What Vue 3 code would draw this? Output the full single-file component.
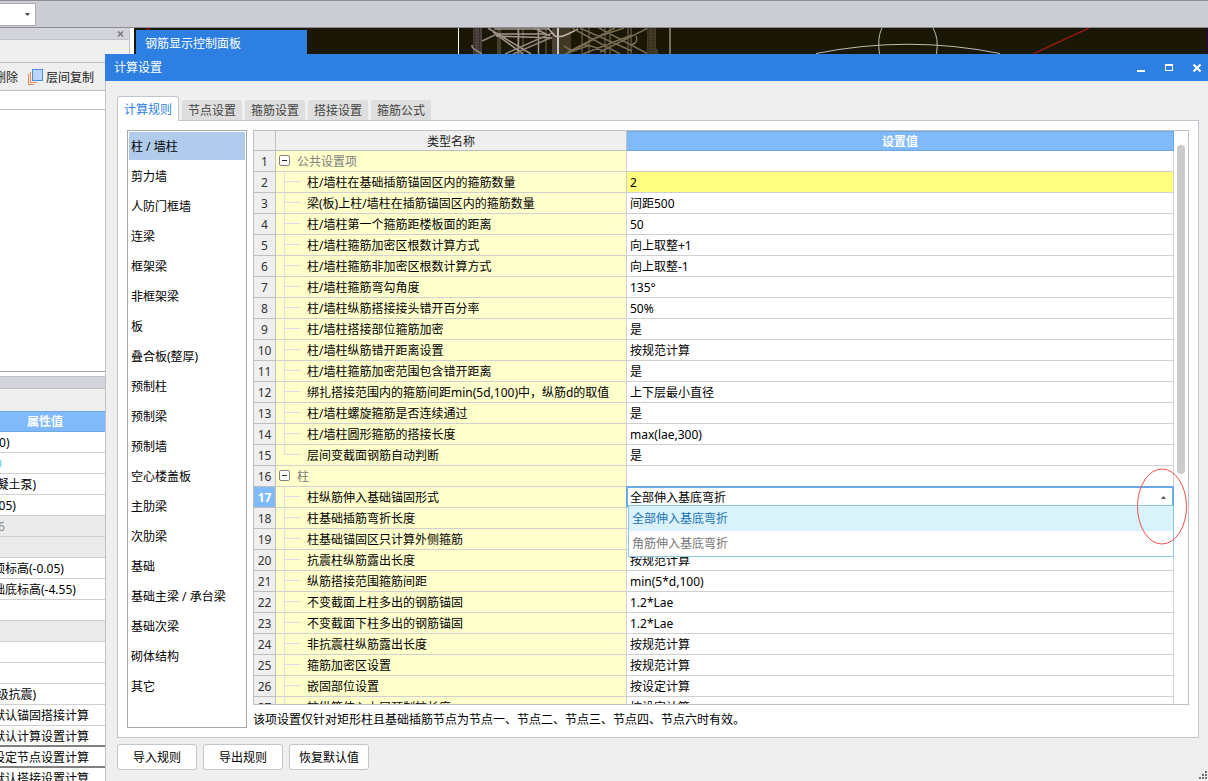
<script setup>
import { ref } from 'vue'

const tabs = ['计算规则', '节点设置', '箍筋设置', '搭接设置', '箍筋公式']
const activeTab = ref(0)

const categories = [
  '柱 / 墙柱', '剪力墙', '人防门框墙', '连梁', '框架梁', '非框架梁', '板', '叠合板(整厚)',
  '预制柱', '预制梁', '预制墙', '空心楼盖板', '主肋梁', '次肋梁', '基础',
  '基础主梁 / 承台梁', '基础次梁', '砌体结构', '其它',
]
const activeCategory = ref(0)

const options = ['全部伸入基底弯折', '角筋伸入基底弯折']
const anchorForm = ref(options[0])

const rows = [
  { name: '公共设置项', group: true },
  { name: '柱/墙柱在基础插筋锚固区内的箍筋数量', value: '2', marked: true },
  { name: '梁(板)上柱/墙柱在插筋锚固区内的箍筋数量', value: '间距500' },
  { name: '柱/墙柱第一个箍筋距楼板面的距离', value: '50' },
  { name: '柱/墙柱箍筋加密区根数计算方式', value: '向上取整+1' },
  { name: '柱/墙柱箍筋非加密区根数计算方式', value: '向上取整-1' },
  { name: '柱/墙柱箍筋弯勾角度', value: '135°' },
  { name: '柱/墙柱纵筋搭接接头错开百分率', value: '50%' },
  { name: '柱/墙柱搭接部位箍筋加密', value: '是' },
  { name: '柱/墙柱纵筋错开距离设置', value: '按规范计算' },
  { name: '柱/墙柱箍筋加密范围包含错开距离', value: '是' },
  { name: '绑扎搭接范围内的箍筋间距min(5d,100)中，纵筋d的取值', value: '上下层最小直径' },
  { name: '柱/墙柱螺旋箍筋是否连续通过', value: '是' },
  { name: '柱/墙柱圆形箍筋的搭接长度', value: 'max(lae,300)' },
  { name: '层间变截面钢筋自动判断', value: '是', last: true },
  { name: '柱', group: true },
  { name: '柱纵筋伸入基础锚固形式', editing: true },
  { name: '柱基础插筋弯折长度', value: '' },
  { name: '柱基础锚固区只计算外侧箍筋', value: '' },
  { name: '抗震柱纵筋露出长度', value: '按规范计算' },
  { name: '纵筋搭接范围箍筋间距', value: 'min(5*d,100)' },
  { name: '不变截面上柱多出的钢筋锚固', value: '1.2*Lae' },
  { name: '不变截面下柱多出的钢筋锚固', value: '1.2*Lae' },
  { name: '非抗震柱纵筋露出长度', value: '按规范计算' },
  { name: '箍筋加密区设置', value: '按规范计算' },
  { name: '嵌固部位设置', value: '按设定计算' },
  { name: '柱纵筋伸入上层预制柱长度', value: '按设定计算' },
]

const properties = [
  { text: '(C20)' },
  { text: '320', tone: 'link' },
  { text: '(混凝土泵)' },
  { text: '(-0.05)' },
  { text: '4.56', tone: 'muted' },
  { text: '', tone: 'muted' },
  { text: '层顶标高(-0.05)' },
  { text: '基础底标高(-4.55)' },
  { text: '' },
  { text: '', tone: 'muted' },
  { text: '' },
  { text: '' },
  { text: '(一级抗震)' },
  { text: '按默认锚固搭接计算' },
  { text: '按默认计算设置计算', tone: 'ruled' },
  { text: '按设定节点设置计算', tone: 'ruled' },
  { text: '按默认搭接设置计算' },
]
</script>

<template>
  <div class="app">
    <header class="ribbon">
      <button class="combo" type="button" aria-label="楼层">
        <svg width="5" height="3" viewBox="0 0 5 3"><path d="M0 0H5L2.500 3Z" fill="#444" /></svg>
      </button>
    </header>

    <div class="workspace">
      <aside class="side">
        <div class="side-title">
          <button type="button" class="side-close" aria-label="关闭">
            <svg width="7" height="6" viewBox="0 0 7 6"><path d="M1 0.500L6 5.500M6 0.500L1 5.500" stroke="#777" stroke-width="1.500" /></svg>
          </button>
        </div>
        <div class="side-blank"></div>
        <div class="side-tools">
          <button type="button"><span>删除</span></button>
          <button type="button">
            <svg width="15" height="16" viewBox="0 0 15 16" fill="none">
              <path d="M.5 5V15.500H6M2.500 3V13.500H9" stroke="#e8894a" />
              <rect x="4.500" y=".5" width="10" height="11" fill="#b9d6fa" stroke="#4a90e2" />
            </svg>
            <span>层间复制</span>
          </button>
        </div>
        <div class="side-search"></div>
        <div class="side-list"></div>
        <div class="side-gap"></div>
        <div class="side-title lower"></div>
        <div class="side-blank lower"></div>
        <table class="props">
          <thead><tr><th>属性值</th></tr></thead>
          <tbody>
            <tr v-for="(p, i) in properties" :key="i" :class="p.tone"><td>{{ p.text }}</td></tr>
          </tbody>
        </table>
      </aside>

      <main class="viewport">
        <svg class="model" width="1074" height="26" viewBox="134 28 1074 26" fill="none">
          <path d="M458.500 28V54" stroke="#fff" />
          <path d="M473 28H482V54H473Z" fill="#4b403b" />
          <path d="M474.500 28V54M479.500 28V54" stroke="#2e2724" stroke-dasharray="2 1" />
          <path d="M498 28V54M500 28V54M518 28V54M523 28V54M546 28V54" stroke="#6d6455" />
          <path d="M518.500 28V54M538.500 28V54" stroke="#a4948d" stroke-width="1.500" />
          <path d="M488 28L531 54M493 32L523 54M494 29H548M498 34H546M496 36L556 38M534 28L550 36" stroke="#a4948d" stroke-width="1.500" />
          <path d="M505 54L552 33M513 54L555 36M482 41L497 34M473 46Q470 45 474 49L482 54" stroke="#91827a" stroke-width="1.500" />
          <path d="M559 28H571V54H559Z" fill="#403823" />
          <path d="M554.500 28V54" stroke="#4a4038" stroke-width="5" />
          <path d="M558 28V54" stroke="#fff" stroke-width="1.500" />
          <path d="M548 28L555 36Q560 38 568 34L578 29" stroke="#c0b1aa" stroke-width="1.500" />
          <path d="M582 28V54M589 28V54M605 28V54M610 28V54M628 28V54M631 28V54" stroke="#595039" stroke-width="1.500" />
          <path d="M564 46L572 51L600 36L624 28M568 52L615 28M572 28L620 54M580 28L632 51M599 28L648 54M648 28L600 52M632 35L583 54M590 45L565 54M584 45Q589 44 606 52M636 36Q639 43 630 45" stroke="#776b50" stroke-width="1.500" />
          <path d="M647 28H656V54H647Z" fill="#443a24" />
          <path d="M649 28V54M653 28V54" stroke="#292211" stroke-dasharray="2 1" />
          <path d="M656 49Q658 50 657 54" stroke="#71664b" />
          <path d="M670 28V54" stroke="#776f60" stroke-width="2" />
          <path d="M816 53.500Q908 35 1000 53.500M879.500 54Q877 38 882 28M936.500 54Q939 38 933 28" stroke="#bdbdb5" />
          <path d="M1033 54L1089 28M146 28L151 31" stroke="#8d1b0b" stroke-width="1.500" />
          <path d="M1207.500 28V54" stroke="#2b064f" />
        </svg>
        <div class="float-title">钢筋显示控制面板</div>
      </main>
    </div>

    <section class="dialog" role="dialog" aria-labelledby="dialog-title">
      <header class="titlebar">
        <h1 id="dialog-title">计算设置</h1>
        <button type="button" aria-label="最小化">
          <svg width="8" height="8" viewBox="0 0 8 8"><path d="M0 6H8V8H0Z" fill="#fff" /></svg>
        </button>
        <button type="button" aria-label="最大化">
          <svg width="8" height="8" viewBox="0 0 8 8"><path d="M0 0H8V7H0ZM1 2V6H7V2Z" fill="#fff" fill-rule="evenodd" /></svg>
        </button>
        <button type="button" aria-label="关闭">
          <svg width="8" height="8" viewBox="0 0 8 8"><path d="M.5 .5L7.500 7.500M7.500 .5L.5 7.500" stroke="#fff" stroke-width="2" /></svg>
        </button>
      </header>

      <div class="dialog-body">
        <nav class="tabs" role="tablist">
          <button
            v-for="(t, i) in tabs" :key="t" type="button" role="tab"
            :class="{ active: i === activeTab }" :aria-selected="i === activeTab"
            @click="activeTab = i"
          >{{ t }}</button>
        </nav>

        <div class="pane">
          <ul class="categories">
            <li v-for="(c, i) in categories" :key="c">
              <button type="button" :class="{ active: i === activeCategory }" @click="activeCategory = i">{{ c }}</button>
            </li>
          </ul>

          <div class="settings">
            <div class="grid-box">
              <table class="grid">
                <thead>
                  <tr><th class="num"></th><th class="name">类型名称</th><th class="val">设置值</th></tr>
                </thead>
                <tbody>
                  <tr v-for="(r, i) in rows" :key="i" :class="{ group: r.group, marked: r.marked, editing: r.editing, last: r.last }">
                    <th class="num" scope="row">{{ i + 1 }}</th>
                    <td class="name">
                      <div class="node">
                        <button v-if="r.group" type="button" class="toggle" aria-label="折叠">
                          <svg width="11" height="11" viewBox="0 0 11 11">
                            <rect x=".5" y=".5" width="10" height="10" rx="1.500" fill="#fff" stroke="#808080" />
                            <path d="M3 5.500H8" stroke="#222" />
                          </svg>
                        </button>
                        <span v-else class="branch"></span>
                        <span class="label">{{ r.name }}</span>
                      </div>
                    </td>
                    <td v-if="r.editing" class="val">
                      <select v-model="anchorForm" aria-label="柱纵筋伸入基础锚固形式">
                        <option v-for="o in options" :key="o">{{ o }}</option>
                      </select>
                      <svg class="caret" width="5" height="3" viewBox="0 0 5 3"><path d="M0 3H5L2.500 0Z" fill="#555" /></svg>
                      <ul class="menu" role="listbox">
                        <li v-for="o in options" :key="o" role="option" :class="{ active: o === anchorForm }" :aria-selected="o === anchorForm" @click="anchorForm = o">{{ o }}</li>
                      </ul>
                      <svg class="mark" width="50" height="77" viewBox="0 0 50 77">
                        <ellipse cx="25" cy="38.500" rx="24.500" ry="37.500" fill="none" stroke="#f05050" />
                      </svg>
                    </td>
                    <td v-else class="val">{{ r.value }}</td>
                  </tr>
                </tbody>
              </table>
              <div class="gutter"><div class="thumb"></div></div>
            </div>
            <p class="note">该项设置仅针对矩形柱且基础插筋节点为节点一、节点二、节点三、节点四、节点六时有效。</p>
          </div>
        </div>

        <footer class="actions">
          <button type="button">导入规则</button>
          <button type="button">导出规则</button>
          <button type="button">恢复默认值</button>
        </footer>
      </div>
      <svg class="grip" width="8" height="8" viewBox="0 0 8 8">
        <path d="M6 0H8V2H6ZM3 3H5V5H3ZM6 3H8V5H6ZM0 6H2V8H0ZM3 6H5V8H3ZM6 6H8V8H6Z" fill="#6b7078" />
      </svg>
    </section>
  </div>
</template>

<style>
body {
  margin: 0;
  overflow: hidden;
}
</style>

<style scoped>
* {
  box-sizing: border-box;
}
.app {
  position: relative;
  display: flex;
  flex-direction: column;
  height: 100vh;
  overflow: hidden;
  background: #fff;
  color: #000;
  font-family: "Noto Sans", "Noto Sans CJK SC", sans-serif;
  font-size: 12px;
  line-height: 20px;
}
svg {
  display: block;
}
button {
  padding: 0;
  border: 0;
  background: none;
  color: inherit;
  font: inherit;
}
ul {
  margin: 0;
  padding: 0;
  list-style: none;
}

.ribbon {
  flex: none;
  height: 28px;
  padding-top: 2px;
  border-top: 1px solid #8b8d92;
  border-bottom: 1px solid #8b8d92;
  background: #cbcdd2;
}
.combo {
  display: flex;
  align-items: center;
  justify-content: flex-end;
  width: 36px;
  height: 23px;
  padding-right: 5px;
  border: 1px solid #a9abb0;
  border-left: 0;
  background: #fff;
}

.workspace {
  display: flex;
  flex: 1;
  min-height: 0;
}
.side {
  flex: none;
  width: 130px;
  margin-right: 4px;
  overflow: hidden;
  border-right: 1px solid #bfc1c6;
}
.side-title {
  display: flex;
  align-items: center;
  justify-content: flex-end;
  height: 12px;
  padding-right: 5px;
  border-bottom: 1px solid #bfc1c6;
  background: #d4d4dc;
}
.side-blank {
  height: 23px;
  border-bottom: 1px solid #bfc1c6;
  background: #efefef;
}
.side-blank.lower {
  height: 22px;
  border-bottom: 0;
}
.side-tools {
  display: flex;
  gap: 10px;
  height: 28px;
  margin-left: -6px;
  border-bottom: 1px solid #bfc1c6;
  background: #efefef;
  color: #222;
}
.side-tools button {
  display: flex;
  flex: none;
  align-items: center;
  gap: 3px;
}
.side-tools span {
  padding-top: 2px;
}
.side-search {
  height: 19px;
  border-bottom: 1px solid #bfc1c6;
}
.side-list {
  height: 262px;
  border-bottom: 1px solid #a0a2a6;
}
.side-gap {
  height: 5px;
  border-bottom: 1px solid #bfc1c6;
}
.props {
  width: 134px;
  margin-left: -22px;
  border-spacing: 0;
  white-space: nowrap;
}
.props th {
  height: 21px;
  padding: 0;
  border-top: 1px solid #6aa9e6;
  border-bottom: 1px solid #6aa9e6;
  background: #80bafa;
  color: #fff;
  line-height: 19px;
}
.props td {
  height: 21px;
  padding: 2px 0 0 3px;
  border-bottom: 1px solid #d0d0d0;
  line-height: 18px;
}
.props .link td {
  color: #4fd0f0;
}
.props .muted td {
  background: #eaeaea;
  color: #8a8a8a;
}
.props .ruled td {
  border-bottom: 2px solid #808080;
  line-height: 17px;
}

.viewport {
  position: relative;
  flex: 1;
  min-width: 0;
  overflow: hidden;
  background: #1a1705;
}
.model {
  position: absolute;
  top: 0;
  left: 0;
}
.float-title {
  position: absolute;
  top: 2px;
  left: 2px;
  width: 171px;
  padding: 4px 9px;
  background: #2d7fe2;
  color: #fff;
}

.dialog {
  position: absolute;
  inset: 54px 0 0 105px;
  display: flex;
  flex-direction: column;
  background: #efefef;
}
.titlebar {
  display: flex;
  flex: none;
  align-items: center;
  gap: 8px;
  height: 27px;
  padding: 0 1px 0 9px;
  background: #2d7fe2;
  color: #fff;
}
.titlebar h1 {
  flex: 1;
  margin: 0;
  font-size: 12px;
  font-weight: 400;
}
.titlebar button {
  display: flex;
  align-items: center;
  justify-content: center;
  width: 20px;
  height: 20px;
}
.dialog-body {
  display: flex;
  flex: 1;
  flex-direction: column;
  min-height: 0;
  padding: 15px 9px 11px 11px;
  border-left: 1px solid #bfc1c6;
}
.tabs {
  position: relative;
  display: flex;
  flex: none;
  align-items: flex-end;
  gap: 3px;
  margin-bottom: -1px;
}
.tabs button {
  width: 60px;
  height: 20px;
  margin-bottom: 1px;
  padding-top: 2px;
  border-radius: 3px 3px 0 0;
  background: #dedede;
  color: #444;
  line-height: 18px;
}
.tabs .active {
  width: 62px;
  height: 25px;
  margin-bottom: 0;
  border: 1px solid #c0c4cc;
  border-bottom: 0;
  background: #fff;
  color: #2d7fe2;
}
.pane {
  display: flex;
  flex: 1;
  gap: 6px;
  min-height: 0;
  padding: 9px;
  border: 1px solid #c0c4cc;
  background: #fff;
}
.categories {
  display: flex;
  flex: none;
  flex-direction: column;
  gap: 2px;
  width: 120px;
  padding: 1px;
  overflow: hidden;
  border: 1px solid #a6a8ac;
}
.categories button {
  display: block;
  width: 100%;
  height: 28px;
  padding: 2px 2px 0;
  line-height: 26px;
  text-align: left;
}
.categories .active {
  background: #b1cbec;
}
.settings {
  display: flex;
  flex: 1;
  flex-direction: column;
  min-width: 0;
}
.grid-box {
  display: flex;
  flex: 1;
  align-items: flex-start;
  min-height: 0;
  overflow: hidden;
  border: 1px solid #bfbfbf;
}
.grid {
  flex: 1;
  min-width: 0;
  table-layout: fixed;
  border-spacing: 0;
  white-space: nowrap;
}
.grid th,
.grid td {
  height: 21px;
  padding: 2px 0 0;
  border-right: 1px solid #d0d0d0;
  border-bottom: 1px solid #d0d0d0;
  font-weight: 400;
  line-height: 18px;
}
.grid thead th {
  height: 20px;
  border-color: #bfbfbf;
  background: #efefef;
  color: #222;
  line-height: 17px;
}
.grid .num {
  width: 22px;
  border-color: #bfbfbf;
  background: #efefef;
  color: #333;
}
.grid .name {
  width: 351px;
}
.grid thead .val {
  border: 1px solid #6aa9e6;
  border-width: 1px 1px 1px 0;
  background: #80bafa;
  color: #fff;
  font-weight: 700;
  line-height: 16px;
}
.grid td.name {
  padding: 0;
  background: #ffffcc;
}
.grid td.val {
  padding-left: 3px;
}
.node {
  display: flex;
  align-items: center;
  height: 20px;
  padding-left: 8px;
}
.label {
  padding-top: 2px;
}
.group .node {
  gap: 7px;
  padding-left: 3px;
  color: #808080;
}
.toggle {
  margin-bottom: 1px;
}
.branch {
  flex: none;
  align-self: flex-start;
  width: 23px;
  height: 21px;
  background:
    linear-gradient(#dedee6, #dedee6) 0 0 / 1px 100% no-repeat,
    linear-gradient(#dedee6, #dedee6) 0 9px / 17px 1px no-repeat;
}
.last .branch {
  background:
    linear-gradient(#dedee6, #dedee6) 0 0 / 1px 9px no-repeat,
    linear-gradient(#dedee6, #dedee6) 0 9px / 17px 1px no-repeat;
}
.grid .marked .val {
  background: #ffff80;
}
.grid .editing .num {
  background: #80bafa;
  color: #fff;
  font-weight: 700;
}
.editing .val {
  position: relative;
}
.editing select {
  position: absolute;
  inset: -1px -1px 0 -1px;
  width: calc(100% + 2px);
  padding: 0 2px;
  appearance: none;
  border: 2px solid #6aa9e6;
  border-bottom: 0;
  border-radius: 0;
  background: #fff;
  color: #000;
  font: inherit;
}
.caret {
  position: absolute;
  top: 9px;
  right: 7px;
}
.menu {
  position: absolute;
  z-index: 1;
  top: 18px;
  right: -1px;
  left: 1px;
  border: 1px solid #8cc8e2;
  background: #fff;
  color: #777;
}
.menu li {
  height: 25px;
  padding: 0 3px;
  line-height: 26px;
}
.menu .active {
  background: #daf2fa;
  color: #1a73b8;
}
.mark {
  position: absolute;
  z-index: 2;
  top: -19px;
  right: -14px;
}
.gutter {
  flex: none;
  width: 14px;
  padding: 14px 3px 0;
}
.thumb {
  width: 8px;
  height: 329px;
  border-radius: 4px;
  background: #cbcbcb;
}
.note {
  flex: none;
  margin: 0;
  padding-top: 6px;
  line-height: 17px;
}
.actions {
  display: flex;
  flex: none;
  gap: 6px;
  margin-top: 6px;
}
.actions button {
  width: 80px;
  height: 26px;
  padding-top: 2px;
  border: 1px solid #c4c6ca;
  border-radius: 3px;
  background: #fff;
}
.grip {
  position: absolute;
  right: 1px;
  bottom: 2px;
}
</style>
